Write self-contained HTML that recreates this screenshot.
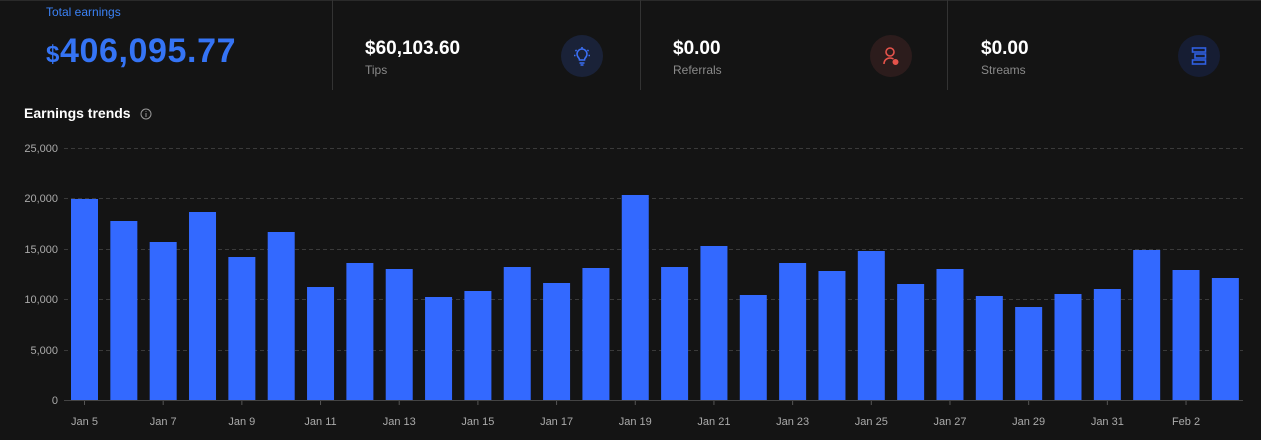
<!DOCTYPE html><html><head><style>
body{margin:0;width:1261px;height:440px;background:#141414;font-family:"Liberation Sans",sans-serif;overflow:hidden;position:relative;color:#fff}
.a{position:absolute}
.div{position:absolute;top:0;width:1px;height:90px;background:#333}
.v{font-size:19px;font-weight:bold;color:#fff}
.l{font-size:12px;color:#8a8a8a}
.ic{position:absolute;width:42px;height:42px;border-radius:50%;top:35px}
</style></head><body>
<div class="a" style="left:0;top:0;width:1261px;height:1px;background:#2a2a2a"></div>
<div class="a" style="left:46px;top:5px;font-size:12px;color:#3b82f6">Total earnings</div>
<div class="a" style="left:46px;top:32px;font-size:34px;font-weight:bold;color:#3574f5;letter-spacing:0.6px"><span style="font-size:24px">$</span>406,095.77</div>
<div class="div" style="left:332px"></div><div class="div" style="left:640px"></div><div class="div" style="left:947px"></div>
<div class="a v" style="left:365px;top:38px">$60,103.60</div><div class="a l" style="left:365px;top:63px">Tips</div>
<div class="ic" style="left:561px;background:#1a2238"><svg width="42" height="42" viewBox="0 0 42 42" fill="none" stroke="#3b6ff5" stroke-width="1.6"><path d="M17 22a5 5 0 1 1 8 0c-1 1-1.5 2-1.5 3h-5c0-1-.5-2-1.5-3zM18.5 28h5M19.5 30h3M21 12v1.5M14.5 15l1 1M27.5 15l-1 1M13 20.5h1.5M29 20.5h-1.5"/></svg></div>
<div class="a v" style="left:673px;top:38px">$0.00</div><div class="a l" style="left:673px;top:63px">Referrals</div>
<div class="ic" style="left:870px;background:#2c1c1c"><svg width="42" height="42" viewBox="0 0 42 42" fill="none" stroke="#e5534b" stroke-width="1.6"><circle cx="20" cy="17" r="4"/><path d="M14 29c0-4 3-6 6-6 1.5 0 2.5.4 3.5 1"/><circle cx="25.5" cy="27" r="2.2" fill="#e5534b"/></svg></div>
<div class="a v" style="left:981px;top:38px">$0.00</div><div class="a l" style="left:981px;top:63px">Streams</div>
<div class="ic" style="left:1178px;background:#161d33"><svg width="42" height="42" viewBox="0 0 42 42" fill="none" stroke="#2f5fe0" stroke-width="1.6"><rect x="14.5" y="13" width="13" height="4"/><rect x="17" y="19" width="10.5" height="4"/><rect x="14.5" y="25" width="13" height="4"/></svg></div>
<div class="a" style="left:24px;top:105px;font-size:14px;font-weight:bold">Earnings trends</div>
<svg class="a" style="left:140px;top:108px" width="12" height="12"><circle cx="6" cy="6" r="5" fill="none" stroke="#999"/><path d="M6 5v4M6 3.2v.8" stroke="#999"/></svg>
<svg class="a" style="left:0;top:0" width="1261" height="440" font-family="Liberation Sans,sans-serif" font-size="11" fill="#aaa">
<g stroke="#3a3a3a" stroke-dasharray="4 3"><line x1="64" x2="1243" y1="148.5" y2="148.5"/><line x1="64" x2="1243" y1="198.5" y2="198.5"/><line x1="64" x2="1243" y1="249.5" y2="249.5"/><line x1="64" x2="1243" y1="299.5" y2="299.5"/><line x1="64" x2="1243" y1="350.5" y2="350.5"/></g>
<line x1="64" x2="1243" y1="400.5" y2="400.5" stroke="#444"/>
<g text-anchor="end"><text x="58" y="152">25,000</text><text x="58" y="202">20,000</text><text x="58" y="253">15,000</text><text x="58" y="303">10,000</text><text x="58" y="354">5,000</text><text x="58" y="404">0</text></g>
<g id="b" fill="#3369ff"></g>
<g text-anchor="middle" id="t"></g>
</svg>
<script>
var tops=[199,221,242,212,257,232,287,263,269,297,291,267,283,268,195,267,246,295,263,271,251,284,269,296,307,294,289,250,270,278];
var labs=["Jan 5","Jan 7","Jan 9","Jan 11","Jan 13","Jan 15","Jan 17","Jan 19","Jan 21","Jan 23","Jan 25","Jan 27","Jan 29","Jan 31","Feb 2"];
var b=document.getElementById('b'),t=document.getElementById('t'),h='',s='';
tops.forEach(function(y,i){var c=84.5+i*39.34;h+='<rect x="'+(c-13.5)+'" y="'+y+'" width="27" height="'+(400-y)+'"/>';});
b.innerHTML=h;
labs.forEach(function(l,i){var c=84.5+i*2*39.34;s+='<text x="'+c+'" y="425">'+l+'</text><line x1="'+c+'" x2="'+c+'" y1="401" y2="405" stroke="#555"/>';});
t.innerHTML=s;
</script>
</body></html>
